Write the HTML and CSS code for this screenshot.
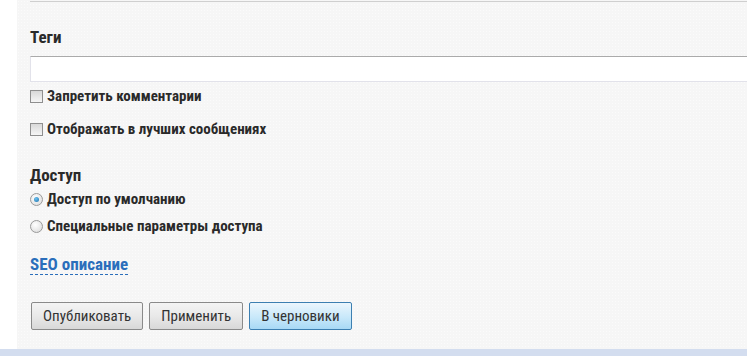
FILE: index.html
```html
<!DOCTYPE html>
<html lang="ru">
<head>
<meta charset="utf-8">
<link rel="stylesheet" href="styles.css">
</head>
<body>
<div class="page">
  <div class="gutter"></div>
  <main class="content">
    <div class="prev-field"></div>
    <h3 class="label">Теги</h3>
    <input class="text-input" type="text">
    <label class="check first"><span class="box"></span>Запретить комментарии</label>
    <label class="check"><span class="box"></span>Отображать в лучших сообщениях</label>
    <h3 class="label access">Доступ</h3>
    <label class="radio first"><span class="dot on"></span>Доступ по умолчанию</label>
    <label class="radio"><span class="dot"></span>Специальные параметры доступа</label>
    <a class="seo">SEO описание</a>
    <div class="buttons">
      <button class="btn">Опубликовать</button>
      <button class="btn">Применить</button>
      <button class="btn blue">В черновики</button>
    </div>
  </main>
</div>
<div class="footer-strip"></div>
</body>
</html>
```
FILE: styles.css
```css
html, body {
  margin: 0;
  padding: 0;
  background: #fff;
  font-family: "Roboto Condensed", "DejaVu Sans Condensed", "Liberation Sans", sans-serif;
  color: #333;
}
.page {
  display: flex;
  height: 349px;
  overflow: hidden;
}
.gutter {
  width: 17px;
  flex: none;
  background: #fff;
}
.content {
  flex: 1;
  background-color: #f6f6f6;
  background-image: radial-gradient(#fbfbfb 0.8px, transparent 1px);
  background-size: 3px 3px;
  padding-left: 13px;
  display: flex;
  flex-direction: column;
  align-items: flex-start;
}
.prev-field {
  align-self: stretch;
  height: 1px;
  border-bottom: 1px solid #cfcfcf;
}
.label {
  margin: 25px 0 0;
  font-size: 17px;
  font-weight: bold;
  line-height: 20px;
  color: #2a2a2a;
}
.text-input {
  align-self: stretch;
  margin: 9px 0 0;
  height: 26px;
  box-sizing: border-box;
  border: 1px solid #e2e2ea;
  border-top-color: #aaa;
  border-right: none;
  background: #fff;
  padding: 0;
}
.check, .radio {
  display: flex;
  align-items: center;
  font-size: 15px;
  font-weight: bold;
  line-height: 18px;
  color: #2a2a2a;
}
.check.first { margin-top: 5px; }
.check + .check { margin-top: 15px; }
.box {
  width: 11px;
  height: 11px;
  border: 1px solid #8f8f8f;
  background: linear-gradient(#d8d8d8, #f6f6f6);
  margin-right: 4px;
}
.label.access {
  margin-top: 27px;
}
.radio.first { margin-top: 5px; }
.radio + .radio { margin-top: 9px; }
.dot {
  width: 11px;
  height: 11px;
  border-radius: 50%;
  border: 1px solid #9a9a9a;
  background: radial-gradient(circle at 40% 35%, #fff, #d8d8d8);
  margin-right: 4px;
  position: relative;
}
.dot.on::after {
  content: "";
  position: absolute;
  left: 3px;
  top: 3px;
  width: 5px;
  height: 5px;
  border-radius: 50%;
  background: radial-gradient(circle at 40% 35%, #6ec3f2, #1b6fa8);
}
.seo {
  margin-top: 19px;
  font-size: 17px;
  font-weight: bold;
  line-height: 20px;
  color: #2a6ebb;
  border-bottom: 1px dashed #2a6ebb;
  cursor: pointer;
}
.buttons {
  display: flex;
  gap: 6px;
  margin: 27px 0 0 1px;
}
.btn {
  height: 28px;
  box-sizing: border-box;
  padding: 0 11px;
  border: 1px solid #8a8a8a;
  border-radius: 2px;
  background: linear-gradient(#f4f4f4, #e9e9e9 50%, #d8d8d8);
  font-family: inherit;
  font-size: 15px;
  color: #333;
}
.btn.blue {
  border-color: #3c7fb1;
  background: linear-gradient(#ebf6fd, #c8e8fa 55%, #a8d9f5);
}
.footer-strip {
  height: 7px;
  background: #d3ddef;
}
```
